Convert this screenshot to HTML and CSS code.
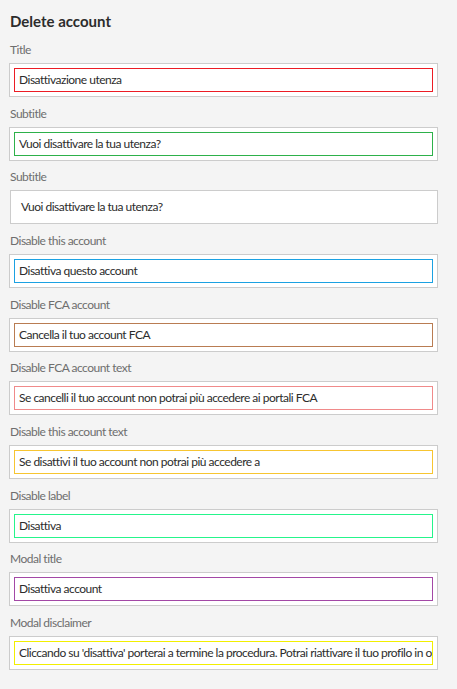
FILE: index.html
```html
<!DOCTYPE html>
<html>
<head>
<meta charset="utf-8">
<link rel="stylesheet" href="styles.css">
</head>
<body>
<div class="panel">
  <h1 class="heading">Delete account</h1>
  <div class="fields">
    <div class="field"><div class="label">Title</div><div class="box"><div class="inner c-red">Disattivazione utenza</div></div></div>
    <div class="field"><div class="label">Subtitle</div><div class="box"><div class="inner c-green">Vuoi disattivare la tua utenza?</div></div></div>
    <div class="field"><div class="label">Subtitle</div><div class="box shifted"><div class="inner c-none">Vuoi disattivare la tua utenza?</div></div></div>
    <div class="field"><div class="label">Disable this account</div><div class="box"><div class="inner c-blue">Disattiva questo account</div></div></div>
    <div class="field"><div class="label">Disable FCA account</div><div class="box"><div class="inner c-brown">Cancella il tuo account FCA</div></div></div>
    <div class="field"><div class="label">Disable FCA account text</div><div class="box"><div class="inner c-pink">Se cancelli il tuo account non potrai più accedere ai portali FCA</div></div></div>
    <div class="field"><div class="label">Disable this account text</div><div class="box"><div class="inner c-amber">Se disattivi il tuo account non potrai più accedere a</div></div></div>
    <div class="field"><div class="label">Disable label</div><div class="box"><div class="inner c-mint">Disattiva</div></div></div>
    <div class="field"><div class="label">Modal title</div><div class="box"><div class="inner c-purple">Disattiva account</div></div></div>
    <div class="field"><div class="label">Modal disclaimer</div><div class="box"><div class="inner c-yellow">Cliccando su 'disattiva' porterai a termine la procedura. Potrai riattivare il tuo profilo in ogni momento</div></div></div>
  </div>
</div>
</body>
</html>
```
FILE: styles.css
```css
html, body {
  margin: 0;
  padding: 0;
  background: #f4f4f4;
}
body {
  font-family: "Lato", "Open Sans", sans-serif;
  color: #2c2c2c;
}
.panel {
  padding: 11px 19px 0 9px;
  width: 429px;
}
.heading {
  margin: 0 0 10px 1px;
  font-size: 15px;
  line-height: 20px;
  font-weight: 700;
  color: #2c2c2c;
}
.fields {
  display: flex;
  flex-direction: column;
  gap: 7.67px;
}
.label {
  font-size: 12px;
  line-height: 18px;
  letter-spacing: -0.5px;
  color: #6e6e6e;
  margin: 0 0 4px 1px;
}
.box {
  box-sizing: border-box;
  height: 34px;
  border: 1px solid #cccccc;
  background: #ffffff;
  padding: 4px;
  overflow: hidden;
}
.box.shifted {
  margin-left: 1px;
}
.inner {
  box-sizing: border-box;
  height: 24px;
  border: 1px solid transparent;
  padding: 0 4px;
  font-size: 12px;
  line-height: 22px;
  letter-spacing: -0.5px;
  white-space: nowrap;
  overflow: hidden;
}
.c-red { border-color: #ec1c24; }
.c-green { border-color: #2db14a; }
.c-none { border-color: transparent; padding-left: 5px; }
.c-blue { border-color: #1ba1e2; }
.c-brown { border-color: #b97c52; }
.c-pink { border-color: #f08a8a; }
.c-amber { border-color: #f7c531; }
.c-mint { border-color: #25f58b; }
.c-purple { border-color: #a348a6; }
.c-yellow { border-color: #f2ef00; }
```
